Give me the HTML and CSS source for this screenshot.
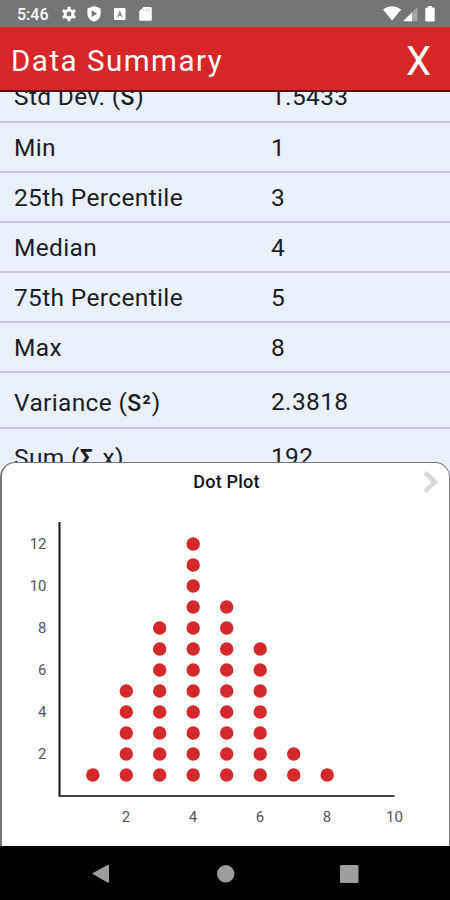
FILE: index.html
```
<!DOCTYPE html>
<html lang="en">
<head>
    <meta charset="UTF-8">
    <meta name="viewport" content="width=device-width, initial-scale=1.0">
    <title>Data Summary</title>
    <link rel="stylesheet" href="styles.css">
</head>
<body>
    <!-- Status bar -->
    <div class="status-bar">
        <span class="clock">5:46</span>
        <svg class="status-icon gear" viewBox="0 0 16 16" width="16" height="16">
            <circle cx="8" cy="8" r="3.9" fill="none" stroke="#fff" stroke-width="2.9"/>
            <path d="M8 .8v3M8 12.2v3M1.8 4.4l2.6 1.5M11.6 10.1l2.6 1.5M1.8 11.6l2.6-1.5M11.6 5.9l2.6-1.5" stroke="#fff" stroke-width="3"/>
        </svg>
        <svg class="status-icon shield" viewBox="0 0 14 16" width="14" height="16">
            <path d="M7 0l6.6 2.5v5c0 4-2.7 7-6.6 8.3C3.1 14.5.4 11.5.4 7.5v-5z" fill="#fff"/>
            <path d="M4.6 4.3v6.7l5.6-3.3z" fill="#777"/>
        </svg>
        <svg class="status-icon square" viewBox="0 0 12 12" width="12" height="12">
            <rect width="11.5" height="12" rx="1" fill="#fff"/>
            <path d="M3.8 9L5.8 3.8l2 5.2M4.5 7.4h2.6" fill="none" stroke="#888" stroke-width="1.3"/>
        </svg>
        <svg class="status-icon" viewBox="0 0 13 14" width="13" height="14">
            <path d="M4.5 0H11.5q1.3 0 1.3 1.3v11.2q0 1.3-1.3 1.3H1.5Q.2 13.8.2 12.5V4.3z" fill="#fff"/>
            <path d="M4.9 1.8v2.3M7.4 1.8v2.3M9.9 1.8v2.3" stroke="#bbb" stroke-width=".8"/>
        </svg>
        <div class="status-right">
            <svg viewBox="0 0 42 16" width="42" height="16">
                <path d="M0 3.5Q9-2.8 18.2 3.5L9.1 14.5z" fill="#fff"/>
                <path d="M20 15.2L34.5 1v14.2z" fill="#a5a5a5"/>
                <path d="M20 15.2L29 6.4v8.8z" fill="#fff"/>
            </svg>
            <svg viewBox="0 0 10 16" width="10" height="16">
                <path d="M3.2 0h3.6v1.6h1.7q1.2 0 1.2 1.2v11.6q0 1.2-1.2 1.2h-7Q.3 15.6.3 14.4V2.8q0-1.2 1.2-1.2h1.7z" fill="#fff"/>
            </svg>
        </div>
    </div>

    <!-- Header -->
    <div class="header">
        <h1>Data Summary</h1>
        <span class="close">X</span>
    </div>

    <!-- Statistics, scrolled part way down -->
    <div class="stats">
        <div class="stat-row first"><span class="label">Std Dev. (<span class="symbol">S</span>)</span><span class="value">1.5433</span></div>
        <div class="stat-row"><span class="label">Min</span><span class="value">1</span></div>
        <div class="stat-row"><span class="label">25th Percentile</span><span class="value">3</span></div>
        <div class="stat-row"><span class="label">Median</span><span class="value">4</span></div>
        <div class="stat-row"><span class="label">75th Percentile</span><span class="value">5</span></div>
        <div class="stat-row"><span class="label">Max</span><span class="value">8</span></div>
        <div class="stat-row tall"><span class="label">Variance (<span class="symbol">S²</span>)</span><span class="value">2.3818</span></div>
        <div class="stat-row tall last"><span class="label">Sum (<b>Σ</b> x)</span><span class="value">192</span></div>
    </div>

    <!-- Chart -->
    <div class="chart-wrap">
        <div class="chart-card">
            <div class="chart-title">
                <h2>Dot Plot</h2>
                <svg class="next" viewBox="0 0 18 24" width="18" height="24">
                    <path d="M3 2.5l10 9.5-10 9.5" fill="none" stroke="#d9d9d9" stroke-width="4.5"/>
                </svg>
            </div>
            <svg class="plot" viewBox="0 502 450 344" width="450" height="344">
                <path d="M59.5 522V796.3" class="axis"/>
                <path d="M58.7 796H394.5" class="axis light"/>
                <!-- one dashed line per column, one round dash per value -->
                <g class="dots">
                    <path d="M92.8 775v-1"/>
                    <path d="M126.3 775v-85"/>
                    <path d="M159.7 775v-148"/>
                    <path d="M193.2 775v-232"/>
                    <path d="M226.7 775v-169"/>
                    <path d="M260.2 775v-127"/>
                    <path d="M293.7 775v-22"/>
                    <path d="M327.2 775v-1"/>
                </g>
                <g class="ticks y-ticks">
                    <text x="46.5" y="549">12</text>
                    <text x="46.5" y="591">10</text>
                    <text x="46.5" y="633">8</text>
                    <text x="46.5" y="675">6</text>
                    <text x="46.5" y="717">4</text>
                    <text x="46.5" y="759">2</text>
                </g>
                <g class="ticks x-ticks">
                    <text x="126" y="821.5">2</text>
                    <text x="193" y="821.5">4</text>
                    <text x="260" y="821.5">6</text>
                    <text x="327" y="821.5">8</text>
                    <text x="394.5" y="821.5">10</text>
                </g>
            </svg>
        </div>
    </div>

    <!-- Navigation bar -->
    <div class="nav-bar">
        <svg viewBox="0 0 450 54" width="450" height="54">
            <path d="M92 27.5L107.5 19q1.5-.5 1.5 1v15.5q0 1.5-1.5 1z" fill="#9e9e9e"/>
            <circle cx="225.7" cy="27.8" r="8.7" fill="#9e9e9e"/>
            <rect x="340" y="19" width="18.5" height="18" rx="1.5" fill="#9e9e9e"/>
        </svg>
    </div>
</body>
</html>
```
FILE: styles.css
```
* {
    box-sizing: border-box;
}
body {
    margin: 0;
    width: 450px;
    height: 900px;
    display: flex;
    flex-direction: column;
    overflow: hidden;
    font-family: Roboto, "Liberation Sans", sans-serif;
    background-color: #ebf0ff;
    color: #1b1d26;
}
svg {
    display: block;
    flex: none;
}

/* Status bar */
.status-bar {
    height: 27px;
    flex: none;
    display: flex;
    align-items: center;
    padding: 1px 15px 0 17px;
    background-color: #757575;
    color: #fff;
}
.clock {
    width: 44px;
    font-size: 16px;
    font-weight: 500;
}
.gear {
    margin-right: 10px;
}
.shield {
    margin-right: 13px;
}
.square {
    margin-right: 13px;
}
.status-right {
    display: flex;
    margin-left: auto;
}

/* Header */
.header {
    height: 65px;
    flex: none;
    display: flex;
    justify-content: space-between;
    align-items: center;
    padding: 3px 19px 0 11px;
    background-color: #d62626;
    border-bottom: 2px solid #5e1018;
    color: #fff;
    z-index: 1;
}
.header h1 {
    margin: 0;
    padding-top: 1px;
    font-size: 29.5px;
    font-weight: 400;
    letter-spacing: 1.5px;
}
.close {
    padding-top: 3px;
    font-size: 40px;
    line-height: 40px;
}

/* Statistics */
.stats {
    height: 370px;
    flex: none;
    overflow: hidden;
}
.stat-row {
    height: 50px;
    display: flex;
    align-items: center;
    padding: 2px 0 0 14px;
    border-bottom: 2px solid #c7cad7;
    font-size: 24.5px;
    letter-spacing: .35px;
    line-height: 30px;
}
.stat-row.first {
    margin-top: -19px;
    padding-top: 0;
}
.stat-row.tall {
    height: 56px;
    padding-top: 6px;
}
.stat-row.tall .value {
    padding-bottom: 2px;
}
.stat-row.last {
    padding-top: 4px;
}
.label {
    width: 257px;
}
.symbol {
    font-size: 23px;
    font-weight: 500;
    letter-spacing: 1px;
}
.label b {
    margin-right: 3px;
    font-size: 23px;
}

/* Chart */
.chart-wrap {
    height: 384px;
    flex: none;
}
.chart-card {
    height: 384px;
    border: 1px solid #777;
    border-left-width: 2px;
    border-bottom: none;
    border-radius: 15px 15px 0 0;
    background-color: #fff;
    overflow: hidden;
}
.chart-title {
    height: 39px;
    display: flex;
    align-items: center;
    padding: 0 9px 0 27px;
}
.chart-title h2 {
    flex: 1;
    margin: 0;
    padding: 0 0 2px 2px;
    text-align: center;
    font-size: 18px;
    font-weight: 500;
    letter-spacing: .2px;
    color: #111;
}
.next {
    margin-bottom: 2px;
}
.plot {
    margin-left: -2px;
}
.axis {
    stroke: #111;
    stroke-width: 2;
}
.axis.light {
    stroke: #444;
}
.dots {
    fill: none;
    stroke: #d3292b;
    stroke-width: 13.4;
    stroke-linecap: round;
    stroke-dasharray: 0 21;
}
.ticks {
    font-size: 15px;
    fill: #555;
}
.y-ticks {
    text-anchor: end;
}
.x-ticks {
    text-anchor: middle;
}

/* Navigation bar */
.nav-bar {
    height: 54px;
    flex: none;
    background-color: #000;
}
```
